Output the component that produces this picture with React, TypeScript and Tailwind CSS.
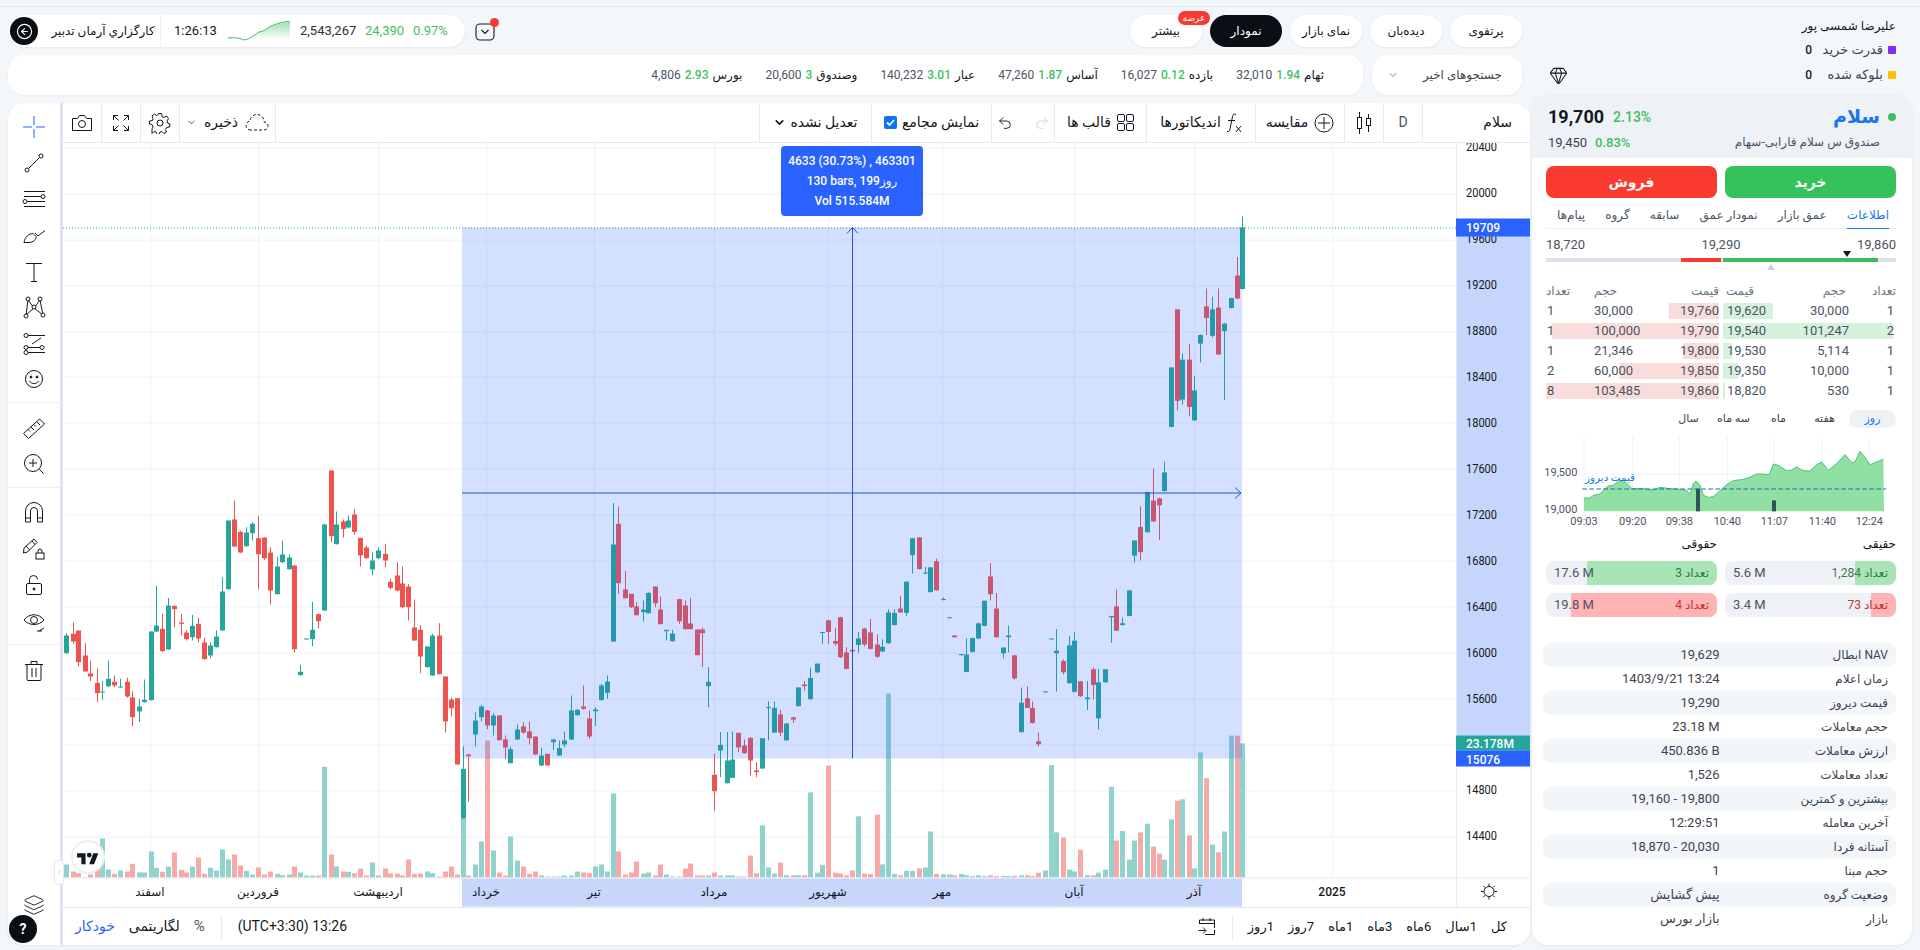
import React from "react";
import { ChevronDown, ChevronLeft, CircleArrowLeft, Gem, Layers, Undo2, Redo2 } from "lucide-react";

// [x, wickTop, bodyTop, bodyBottom, wickBottom, colour, volumeTop]
// numbers are read off two crops, converted below
type C = [number, number, number, number, number, "g" | "r", number];

const left: C[] = [
  [14,578,585,638,640,"g",1272],[28,546,580,603,610,"r",1293],[41,570,570,665,678,"r",1298],[55,608,645,693,693,"r",1310],[68,660,699,708,722,"r",1302],
  [82,684,727,758,785,"r",1285],[95,722,753,755,778,"g",1194],[108,660,715,737,740,"g",1287],[122,705,724,735,740,"r",1300],[135,715,738,740,742,"g",1290],
  [149,712,724,768,772,"r",1293],[162,752,771,830,858,"r",1270],[176,775,798,813,845,"g",1296],[189,717,778,785,786,"g",1296],[203,573,573,779,780,"g",1233],
  [216,435,555,573,575,"g",1282],[229,520,565,632,634,"r",1294],[243,472,495,627,627,"g",1278],[256,495,496,506,560,"r",1236],[270,520,546,550,585,"r",1288],
  [283,568,576,596,600,"r",1296],[296,523,556,590,600,"g",1278],[310,532,550,594,606,"r",1251],[323,592,606,656,657,"r",1300],[337,605,615,645,653,"g",1282],
  [350,570,588,620,621,"g",1290],[364,410,453,570,571,"g",1227],[377,240,240,446,447,"g",1257],[390,180,237,318,320,"r",1242],[404,270,274,336,338,"r",1275],
  [417,260,276,317,318,"g",1291],[431,245,250,278,300,"g",1302],[444,225,293,341,447,"r",1281],[458,290,291,353,358,"r",1302],[471,320,336,450,492,"r",1293],
  [485,348,378,461,462,"g",1300],[498,300,342,365,368,"g",1304],[512,342,351,386,388,"g",1302],[525,373,375,626,636,"r",1278],[538,673,694,704,705,"g",1296],
  [552,594,594,596,597,"g",1305],[565,484,568,596,617,"g",1305],[579,520,521,542,564,"r",1305],[592,250,252,510,510,"g",979],[606,90,90,287,306,"r",1242],
  [619,213,252,311,312,"g",1278],[633,237,243,266,291,"r",1293],[646,225,240,261,264,"g",1294],[659,205,222,274,283,"r",1298],[673,292,292,345,378,"r",1284],
  [686,315,321,353,355,"r",1305],[700,335,360,387,404,"g",1266],[713,320,330,353,356,"g",1305],[727,310,340,360,380,"r",1284],[740,415,424,442,447,"r",1299],
  [754,365,405,450,453,"r",1299],[767,378,429,500,502,"r",1305],[780,430,438,500,540,"r",1257],[794,477,561,600,601,"r",1300],[807,555,568,648,698,"r",1299],
  [821,618,618,680,681,"g",1293],[834,580,585,705,706,"g",1298],[848,548,585,701,702,"r",1308],[862,708,708,843,876,"r",1293],[875,770,777,803,828,"r",1278],
  [889,773,773,972,972,"r",1302],[902,918,985,1134,1134,"g",1134],[915,940,942,947,1083,"r",1305],[929,815,840,882,918,"g",1272],[942,793,798,830,842,"g",1203],
  [956,808,810,855,866,"r",900],[969,818,825,855,885,"g",1230],[983,825,825,899,900,"r",1296],[996,885,897,921,955,"r",1305],[1009,918,926,968,969,"g",1188],
  [1023,852,867,897,898,"g",1260],[1036,845,858,876,880,"r",1278],[1050,843,873,893,912,"r",1300],[1063,888,888,942,944,"r",1293],[1077,922,945,975,977,"g",1305],
  [1090,940,940,975,975,"r",1308],[1104,895,897,905,928,"g",1308],[1117,900,923,945,946,"g",1308],[1130,873,900,912,920,"g",1305],[1144,765,810,897,898,"g",1305],
  [1157,805,808,824,826,"g",1293],[1171,735,798,805,808,"r",1296],[1184,810,834,888,895,"r",1298],[1198,800,807,812,857,"g",1278],[1211,730,735,779,780,"g",1272],
  [1225,705,723,757,775,"g",1293],[1238,188,312,603,604,"g",1059],[1251,198,250,428,460,"r",1233],[1265,392,447,473,475,"r",1302],[1278,460,460,500,502,"r",1296],
  [1291,485,498,524,525,"r",1263],[1305,480,507,515,543,"g",1299],[1318,456,457,518,519,"g",1296],[1332,438,438,488,500,"r",1305],[1345,468,507,551,552,"r",1272],
  [1358,568,568,572,600,"g",1302],[1372,568,579,602,603,"g",1308],[1386,475,476,542,550,"r",1308],[1399,480,495,566,567,"r",1284],[1412,473,549,566,567,"r",1269],
  [1426,567,567,644,645,"r",1305],[1439,562,567,578,680,"r",1305],[1452,680,724,737,800,"g",1305],[1466,940,1003,1052,1110,"r",1296],[1479,875,913,930,1010,"g",1305],
  [1493,875,960,1028,1029,"g",1305],[1506,873,957,1012,1013,"g",1305],[1519,877,877,921,935,"r",1308],[1533,897,915,938,940,"r",1308],[1546,890,892,960,1005,"r",1245],
  [1560,965,990,995,1010,"r",1298],
];

const right: C[] = [
  [5,1240,1240,1310,1310,"g",1441],[18,1155,1168,1170,1245,"g",1538],[30,1155,1170,1227,1228,"g",1552],[43,1175,1185,1227,1235,"r",1527],[56,1205,1206,1245,1245,"g",1556],
  [69,1190,1192,1197,1205,"r",1556],[81,1122,1123,1166,1167,"g",1556],[94,1108,1116,1120,1130,"r",1556],[107,1077,1101,1150,1151,"g",1365],[120,1067,1068,1088,1090,"g",1550],
  [132,995,995,997,1022,"g",1532],[145,968,968,995,1022,"r",1303],[158,985,1016,1022,1027,"r",1550],[170,960,961,1053,1055,"r",1552],[183,1030,1042,1080,1081,"r",1556],
  [196,1028,1036,1040,1085,"r",1545],[208,995,1010,1025,1043,"g",1420],[221,985,987,1024,1028,"r",1552],[234,965,996,1034,1036,"r",1553],[247,1000,1024,1052,1055,"r",1416],
  [259,1012,1029,1040,1041,"g",1531],[272,943,950,1021,1022,"g",1137],[285,943,951,979,980,"g",1553],[297,912,941,950,951,"r",1556],[310,878,879,951,958,"g",1546],
  [323,778,779,818,860,"g",1546],[336,777,777,850,851,"r",1540],[349,845,858,860,862,"g",1538],[361,846,846,903,904,"g",1455],[374,826,832,899,900,"r",1553],
  [387,915,919,921,922,"g",1554],[400,961,961,963,963,"g",1554],[412,1003,1003,1007,1008,"r",1556],[425,1046,1046,1048,1050,"g",1553],[437,1010,1047,1087,1088,"g",1556],
  [450,1008,1009,1041,1042,"g",1558],[463,973,975,1010,1012,"g",1556],[475,923,923,981,982,"g",1558],[488,836,867,908,922,"r",1556],[501,905,941,1007,1008,"r",1558],
  [514,1030,1031,1044,1056,"g",1558],[526,980,1003,1007,1042,"g",1558],[539,1048,1049,1102,1105,"r",1557],[552,1123,1158,1226,1227,"g",1556],[565,1120,1148,1170,1171,"r",1556],
  [577,1155,1170,1205,1206,"r",1558],[590,1227,1247,1254,1259,"r",1550],[603,1132,1132,1134,1134,"g",1545],[616,1010,1010,1012,1012,"g",1302],[628,988,1038,1044,1132,"g",1457],
  [641,1058,1062,1088,1093,"r",1469],[654,1005,1026,1113,1114,"g",1543],[666,996,1015,1133,1134,"g",1547],[679,1108,1109,1143,1145,"r",1497],[692,1108,1146,1150,1175,"g",1556],
  [705,1077,1081,1117,1150,"r",1556],[717,1080,1111,1194,1220,"g",1550],[730,1081,1081,1111,1112,"g",1543],[743,958,958,961,1020,"g",1352],[755,897,936,992,993,"r",1476],
  [768,962,975,979,980,"g",1454],[781,899,899,958,959,"g",1520],[793,783,784,819,835,"g",1476],[806,705,753,811,830,"r",1457],[819,672,672,765,766,"g",1437],
  [832,618,692,740,741,"r",1490],[845,685,687,703,783,"r",1506],[857,602,627,670,671,"g",1520],[870,385,385,522,523,"g",1427],[883,251,251,462,484,"r",1384],
  [895,353,367,459,470,"g",1381],[908,330,367,476,498,"r",1464],[920,405,438,507,508,"g",1540],[933,309,310,330,373,"g",1273],[946,203,244,271,310,"r",1332],
  [958,222,251,312,316,"g",1485],[971,203,247,355,356,"r",1503],[984,282,284,301,460,"g",1455],[997,224,225,248,249,"g",1234],[1010,130,173,226,227,"r",1234],
  [1022,37,62,204,205,"g",1252],
];

const BASE = 877;
const candles = [
  ...left.map((c) => ({ x: Math.round(60 + c[0] / 2.24), wt: 440 + c[1] / 3, bt: 440 + c[2] / 3, bb: 440 + c[3] / 3, wb: 440 + c[4] / 3, c: c[5], v: 440 + c[6] / 3 })),
  ...right.map((c) => ({ x: Math.round(760 + c[0] / 2.119), wt: 200 + c[1] / 2.306, bt: 200 + c[2] / 2.306, bb: 200 + c[3] / 2.306, wb: 200 + c[4] / 2.306, c: c[5], v: 200 + c[6] / 2.306 })),
];

const prices = [20400,20000,19600,19200,18800,18400,18000,17600,17200,16800,16400,16000,15600,15200,14800,14400];
const priceY = (p: number) => 284.6 + (19200 - p) * 0.11484;
const months = [
  { x: 150, t: "اسفند" }, { x: 258, t: "فروردین" }, { x: 378, t: "اردیبهشت" }, { x: 486, t: "خرداد" }, { x: 594, t: "تیر" }, { x: 714, t: "مرداد" },
  { x: 828, t: "شهریور" }, { x: 942, t: "مهر" }, { x: 1074, t: "آبان" }, { x: 1194, t: "آذر" }, { x: 1332, t: "2025" },
];

function Chart() {
  return (
    <svg viewBox="63 143 1467 763" className="block w-full h-full" fontFamily="Roboto, 'DejaVu Sans', sans-serif">
      {prices.map((p) => (
        <line key={p} x1={63} x2={1456} y1={Math.round(priceY(p)) + 0.5} y2={Math.round(priceY(p)) + 0.5} stroke="#f0f2f6" />
      ))}
      {months.map((m) => (
        <line key={m.x} x1={m.x + 0.5} x2={m.x + 0.5} y1={143} y2={877} stroke="#f0f2f6" />
      ))}
      {candles.map((k, i) => (
        <rect key={i} x={k.x - 2} width={5} y={k.v} height={BASE - k.v} fill={k.c === "g" ? "#92d2cc" : "#f7a9a7"} />
      ))}
      {candles.map((k, i) => {
        const col = k.c === "g" ? "#26a69a" : "#ef5350";
        return (
          <g key={i} fill={col}>
            <rect x={k.x} width={1} y={k.wt} height={k.wb - k.wt} />
            <rect x={k.x - 2} width={5} y={k.bt} height={Math.max(k.bb - k.bt, 1)} />
          </g>
        );
      })}
      {/* dotted last price */}
      <line x1={63} x2={1456} y1={227.5} y2={227.5} stroke="#26a69a" strokeDasharray="1 2" />
      {/* measure range */}
      <rect x={462} y={227} width={780} height={531} fill="#2962ff" fillOpacity={0.2} />
      <line x1={462} x2={1241} y1={492.5} y2={492.5} stroke="#2a4fcf" />
      <line x1={852.5} x2={852.5} y1={227} y2={758} stroke="#2a4fcf" />
      <path d="M1235 487l6 5.5-6 5.5M847 233l5.5-6 5.5 6" fill="none" stroke="#2a4fcf" />

      {/* price axis */}
      <rect x={1456} y={143} width={1} height={734} fill="#e6e9f0" />
      <rect x={1457} y={227} width={73} height={531} fill="#c6d5fb" />
      {prices.filter((p) => p !== 15200).map((p) => (
        <text key={p} x={1466} y={priceY(p) + 4} fontSize={12} fill="#131722" textLength={31} lengthAdjust="spacingAndGlyphs">{p}</text>
      ))}
      <rect x={1456} y={218} width={74} height={18} fill="#2962ff" />
      <text x={1466} y={231.5} fontSize={12} fontWeight={500} fill="#fff">19709</text>
      <rect x={1456} y={735} width={74} height={15} fill="#26a69a" />
      <text x={1466} y={747} fontSize={12} fontWeight={500} fill="#fff">23.178M</text>
      <rect x={1456} y={750} width={74} height={16} fill="#2962ff" />
      <text x={1466} y={763} fontSize={12} fontWeight={500} fill="#fff">15076</text>

      {/* time axis */}
      <rect x={63} y={877} width={1467} height={1} fill="#e6e9f0" />
      <rect x={462} y={878} width={780} height={28} fill="#c8d6fb" />
      <rect x={1456} y={878} width={1} height={28} fill="#e6e9f0" />
      {months.map((m) => (
        <text key={m.t} x={m.x} y={895} fontSize={12} fontWeight={m.t === "2025" ? 500 : 400} textAnchor="middle" fill="#131722" direction="rtl">{m.t}</text>
      ))}
      <g transform="translate(1481 883)" fill="none" stroke="#131722">
        <circle cx={8} cy={8} r={5} />
        <path d="M8 0v2.5M8 13.5V16M0 8h2.5M13.5 8H16M2.3 2.3l1.8 1.8M12 12l1.8 1.8M2.3 13.7l1.8-1.8M12 4l1.8-1.8" />
      </g>
    </svg>
  );
}

const I = ({ children, w = 28 }: { children: React.ReactNode; w?: number }) => (
  <svg width={w} height={w} viewBox="0 0 28 28" fill="none" stroke="#131722" strokeWidth={1}>{children}</svg>
);

const groups: React.ReactNode[][] = [
  [
    <I><path d="M14 3v9M14 16v9M3 14h9M16 14h9" stroke="#2962ff" /></I>,
    <I><path d="M8.5 19.5l11-11" /><circle cx="7" cy="21" r="2" /><circle cx="21" cy="7" r="2" /></I>,
    <I><path d="M4 6.500h21M4 11.500h17M7 16.500h18M4 21.500h21" /><circle cx="23" cy="11.500" r="2" /><circle cx="5" cy="16.500" r="2" /></I>,
    <I><path d="M4 21.500c1-6 5-9 9-9l3 3c.5 3-3 6-7 6zM15 12l3 3 7-5.500" /></I>,
    <I><path d="M6 6.500h16M14 6.500v18M11 24.500h6" /></I>,
    <I><path d="M8 7L6 22M8 7l6 8 6-8 3 15M6 22l8-7 9 7" /><circle cx="8" cy="6" r="2" fill="#fff" /><circle cx="20" cy="6" r="2" fill="#fff" /><circle cx="14" cy="14" r="2" fill="#fff" /><circle cx="6" cy="23" r="2" fill="#fff" /><circle cx="23" cy="22" r="2" fill="#fff" /></I>,
    <I><path d="M8 6.500h17M8 18.500h13M8 23.500h17M12 15l9-6" /><circle cx="6" cy="6.500" r="2" fill="#fff" /><circle cx="6" cy="18.500" r="2" fill="#fff" /><circle cx="6" cy="23.500" r="2" fill="#fff" /><circle cx="22" cy="18.500" r="2" fill="#fff" /></I>,
    <I><circle cx="14" cy="14" r="8.500" /><circle cx="11" cy="12" r="1" fill="#131722" /><circle cx="17" cy="12" r="1" fill="#131722" /><path d="M9.500 16c2 3.500 7 3.500 9 0" /></I>,
  ],
  [
    <I><path d="M3.500 19.500L19.500 5l5 5L8.500 24.500zM8 15.500l2 2M11 13l3 3M14 10.500l2 2M17 8l3 3" /></I>,
    <I><circle cx="13" cy="13" r="8.500" /><path d="M13 9v8M9 13h8M19.500 19.500l4 4" /></I>,
  ],
  [
    <I><path d="M5.500 23V12a8.500 8.500 0 0117 0v11h-5V12a3.500 3.500 0 00-7 0v11zM5.500 19h5M17.500 19h5" /></I>,
    <I><path d="M4 13L14 4l3 3.500L7.500 17l-4 1zM6 11l3.500 4M12 6l3 3.500" /><rect x="16" y="18" width="8" height="6" /><path d="M18 18v-2a2 2 0 014 0v2" /></I>,
    <I><rect x="6.500" y="12.500" width="15" height="11" rx="1.500" /><path d="M9.500 12.500V8.500a4 4 0 018 0" /><circle cx="14" cy="18" r="1" fill="#131722" /></I>,
    <I><path d="M4 13c5-7 15-7 20 0-5 6-15 6-20 0z" /><circle cx="14" cy="13" r="3.500" /><path d="M17 24h5M19 24l5-3" /></I>,
  ],
  [<I><path d="M5 7.500h18M11 7.500V4.500h6v3M7 7.500v15a1 1 0 001 1h12a1 1 0 001-1v-15M12 11v9M16 11v9" /></I>],
];

const asks = [
  { n: 1, v: "30,000", p: "19,760", w: 50 },
  { n: 1, v: "100,000", p: "19,790", w: 167 },
  { n: 1, v: "21,346", p: "19,800", w: 36 },
  { n: 2, v: "60,000", p: "19,850", w: 100 },
  { n: 8, v: "103,485", p: "19,860", w: 173 },
];
const bids = [
  { n: 1, v: "30,000", p: "19,620", w: 50 },
  { n: 2, v: "101,247", p: "19,540", w: 170 },
  { n: 1, v: "5,114", p: "19,530", w: 9 },
  { n: 1, v: "10,000", p: "19,350", w: 15 },
  { n: 1, v: "530", p: "18,820", w: 2 },
];

const info = [
  ["NAV ابطال", "19,629"],
  ["زمان اعلام", "1403/9/21 13:24"],
  ["قیمت دیروز", "19,290"],
  ["حجم معاملات", "23.18 M"],
  ["ارزش معاملات", "450.836 B"],
  ["تعداد معاملات", "1,526"],
  ["بیشترین و کمترین", "19,160 - 19,800"],
  ["آخرین معامله", "12:29:51"],
  ["آستانه فردا", "18,870 - 20,030"],
  ["حجم مبنا", "1"],
  ["وضعیت گروه", "پیش گشایش"],
  ["بازار", "بازار بورس"],
];

const tickers = [
  ["ثهام", "1.94", "32,010"],
  ["بازده", "0.12", "16,027"],
  ["آساس", "1.87", "47,260"],
  ["عیار", "3.01", "140,232"],
  ["وصندوق", "3", "20,600"],
  ["بورس", "2.93", "4,806"],
];

const area =
  "162,688 180,688 190,680 210,676 222,662 235,652 250,650 265,638 280,636 295,648 305,660 340,660 370,664 390,656 420,660 450,662 470,665 480,678 490,645 498,637 510,650 520,680 535,686 550,684 570,666 590,648 610,636 640,632 660,626 680,616 700,616 718,618 730,586 745,590 770,606 785,604 800,595 820,606 840,607 860,588 875,580 895,605 920,585 945,558 965,582 975,580 990,548 1000,560 1020,588 1040,580 1060,572";

function MiniChart() {
  const times = [[162, "09:03"], [308, "09:20"], [448, "09:38"], [592, "10:40"], [733, "11:07"], [877, "11:40"], [1018, "12:24"]] as const;
  return (
    <svg viewBox="0 490 1170 300" className="block w-[390px] h-[100px]" fontFamily="Roboto, 'DejaVu Sans', sans-serif">
      {times.map(([x]) => <line key={x} x1={x} x2={x} y1={505} y2={728} stroke="#e8ebf0" strokeWidth={2} />)}
      <line x1={162} x2={1062} y1={616} y2={616} stroke="#e8ebf0" strokeWidth={2} />
      <polygon points={`162,728 ${area} 1062,728`} fill="#90dfa3" />
      <polyline points={area} fill="none" stroke="#4cc56f" strokeWidth={3} />
      <rect x={498} y={660} width={12} height={68} fill="#33535a" />
      <rect x={726} y={695} width={12} height={33} fill="#33535a" />
      <line x1={157} x2={1068} y1={661} y2={661} stroke="#1769d2" strokeWidth={3} strokeDasharray="14 7" />
      <text x={315} y={636} fontSize={31} fill="#1976ee" textAnchor="end">قیمت دیروز</text>
      <text x={43} y={621} fontSize={33} fill="#4b5563">19,500</text>
      <text x={43} y={733} fontSize={33} fill="#4b5563">19,000</text>
      {times.map(([x, t]) => <text key={x} x={x} y={768} fontSize={33} textAnchor="middle" fill="#4b5563">{t}</text>)}
    </svg>
  );
}

export default function App() {
  return (
    <div dir="ltr" className="w-[1920px] h-[950px] overflow-hidden bg-[#f4f7fa] text-[#131722] font-['Roboto','DejaVu_Sans',sans-serif]">
      <div className="h-[7px] border-b border-[#e1e6ef]" />
      <div className="flex pl-2 gap-[2px]">
        {/* left column */}
        <div className="w-[1522px]">
          <div className="flex justify-between items-center h-8 mt-2 pr-2">
            <div className="flex items-center gap-[10px]">
              <div className="flex items-center h-8 w-[457px] pl-[2px] bg-white rounded-full shadow-[0_1px_3px_rgba(20,30,60,.08)] text-[13px]">
                <div className="w-7 h-7 rounded-full bg-[#0b0e14] flex items-center justify-center text-white">
                  <CircleArrowLeft size={17} strokeWidth={1.6} />
                </div>
                <div className="w-[122px] pl-2 text-center text-[12px] whitespace-nowrap">كارگزاري آرمان تدبير</div>
                <div className="w-px h-8 bg-[#eef0f4]" />
                <div className="ml-[13px] w-[42px]">1:26:13</div>
                <svg className="ml-[11px]" width="65" height="20" viewBox="0 0 65 20">
                  <defs>
                    <linearGradient id="spark" x1="0" y1="0" x2="0" y2="1">
                      <stop offset="0" stopColor="#4cc56f" stopOpacity=".55" />
                      <stop offset="1" stopColor="#4cc56f" stopOpacity="0" />
                    </linearGradient>
                  </defs>
                  <path d="M1 17c6-1 12 0 16 2 7-1 11-6 15-8 6-1 7-3 12-6l19-5v19H1z" fill="url(#spark)" />
                  <path d="M1 17c6-1 12 0 16 2 7-1 11-6 15-8 6-1 7-3 12-6 5-2 14-5 19-5" fill="none" stroke="#48bb68" strokeWidth="1" />
                </svg>
                <div className="ml-2 w-[57px] text-[#2b3140]">2,543,267</div>
                <div className="ml-2 w-[40px] text-[#3fbf62]">24,390</div>
                <div className="ml-2 text-[#3fbf62]">0.97%</div>
              </div>
              <div className="relative w-[22px] h-[20px]">
                <svg width="22" height="20" viewBox="0 0 22 20" fill="none" stroke="#131722" strokeWidth="1.100">
                  <rect x="1" y="3" width="18" height="16" rx="4" />
                  <path d="M6.500 9l3.500 3.500L13.500 9" />
                </svg>
                <span className="absolute -top-[3px] right-[-2px] w-[9px] h-[9px] rounded-full bg-[#f73b33]" />
              </div>
            </div>
            <div dir="rtl" className="flex gap-2 text-[12px]">
              {["پرتفوی", "دیده‌بان", "نمای بازار", "نمودار", "بیشتر"].map((t, i) => (
                <div key={t} className={`relative w-[72px] h-8 rounded-full flex items-center justify-center ${i === 3 ? "bg-[#0b0e14] text-white" : "bg-white shadow-[0_1px_3px_rgba(20,30,60,.08)]"}`}>
                  {t}
                  {i === 4 && <span className="absolute -top-1 -right-2 h-[14px] w-8 rounded-full bg-[#f73b33] text-white text-[9px] leading-[14px] text-center">عرضه</span>}
                </div>
              ))}
            </div>
          </div>
          <div className="flex gap-[9px] h-10 mt-2 mr-2" dir="rtl">
            <div className="w-[150px] bg-white rounded-2xl flex items-center justify-between pr-[20px] pl-[15px] text-[12px] text-[#3d4450] shadow-[0_1px_3px_rgba(20,30,60,.06)] whitespace-nowrap">
              جستجوهای اخیر
              <ChevronDown size={12} strokeWidth={1.3} />
            </div>
            <div className="flex-1 bg-white rounded-2xl flex items-center pr-[39px] gap-[23px] text-[12px] shadow-[0_1px_3px_rgba(20,30,60,.06)]">
              {tickers.map(([n, c, v]) => (
                <div key={n} className="flex items-center gap-1 whitespace-nowrap">
                  <span className="font-medium">{n}</span>
                  <span className="text-[#3fbf62] font-medium">{c}</span>
                  <span className="text-[#4b5563]">{v}</span>
                </div>
              ))}
            </div>
          </div>

          {/* chart card */}
          <div className="relative mt-2 h-[842px] bg-white rounded-2xl shadow-[0_1px_3px_rgba(20,30,60,.08)] flex overflow-hidden">
            <div className="w-[52px] shrink-0 flex flex-col items-center">
              {groups.map((g, i) => (
                <div key={i} className={`w-full flex flex-col items-center pb-[5px] ${i === 0 ? "pt-[6px]" : i === 3 ? "pt-2" : "pt-[7px]"} ${i < groups.length - 1 ? "border-b border-[#eceef2]" : ""}`}>
                  {g.map((ic, j) => <div key={j} className="h-9 flex items-center justify-center">{ic}</div>)}
                </div>
              ))}
              <div className="mt-auto self-start w-full flex flex-col items-start">
                <Layers size={22} strokeWidth={1} className="ml-[15px] -mb-px" />
                <div className="w-7 h-7 ml-px mb-[2px] rounded-full bg-[#0b0e14] text-white text-[14px] font-bold flex items-center justify-center">?</div>
              </div>
            </div>
            <div className="w-[3px] bg-[#dfe3f0]" />
            <div className="flex-1 flex flex-col min-w-0">
              <div className="h-10 shrink-0 flex border-b border-[#e6e9f0] text-[14px]">
                <div className="w-[39px] flex items-center justify-center border-r border-[#e6e9f0]">
                  <svg width="22" height="20" viewBox="0 0 22 20" fill="none" stroke="#131722"><path d="M1.500 5.500h5l2-3h5l2 3h5v12h-19z" /><circle cx="11" cy="11" r="3.500" /></svg>
                </div>
                <div className="w-[39px] flex items-center justify-center border-r border-[#e6e9f0]">
                  <svg width="18" height="18" viewBox="0 0 18 18" fill="none" stroke="#131722"><path d="M1.500 6V1.500H6M1.500 1.500l5 5M12 1.500h4.500V6M16.500 1.500l-5 5M1.500 12v4.500H6M1.500 16.500l5-5M12 16.500h4.500V12M16.500 16.500l-5-5" /></svg>
                </div>
                <div className="w-[39px] flex items-center justify-center border-r border-[#e6e9f0]">
                  <svg width="22" height="22" viewBox="0 0 22 22" fill="none" stroke="#131722"><circle cx="11" cy="11" r="3" /><path d="M9.500 1.500h3l.5 3 2 1 2.500-1.500 2 2.500-1.500 2.500.5 2 2.500 1-.5 3-3 .5-1 2 1 2.500-2.500 1.500-2-2-2 .5-1 2.500h-2l-1-2.500-2-.5-2 2L3 17l1-2.500-1-2-2.500-.5v-3l3-.5.5-2L3 4l2.500-2 2 1.500 2-1z" /></svg>
                </div>
                <div dir="rtl" className="w-[96px] flex items-center justify-center gap-[7px] border-r border-[#e6e9f0] text-[14px]">
                  <svg width="24" height="18" viewBox="0 0 24 18" fill="none" stroke="#131722" strokeDasharray="3 2"><path d="M6 16a4.500 4.500 0 01-1-9 7 7 0 0114 1 4 4 0 010 8z" /></svg>
                  ذخیره
                  <ChevronDown size={11} strokeWidth={1.5} />
                </div>
                <div className="flex-1" />
                <div className="w-[112px] flex items-center justify-center gap-1 border-l border-[#e6e9f0] text-[14px]">
                  <ChevronDown size={13} strokeWidth={3} />تعدیل نشده
                </div>
                <div className="w-[120px] flex items-center justify-center gap-[5px] border-l border-[#e6e9f0] text-[14px]">
                  <span className="w-[13px] h-[13px] rounded-[2px] bg-[#0a75f0] flex items-center justify-center">
                    <svg width="9" height="9" viewBox="0 0 9 9" fill="none" stroke="#fff" strokeWidth="1.800"><path d="M1 4.500l2.500 2.500L8 2" /></svg>
                  </span>
                  نمایش مجامع
                </div>
                <div className="w-[63px] flex items-center justify-center gap-[21px] border-l border-[#e6e9f0]">
                  <Undo2 size={16} strokeWidth={1.4} />
                  <Redo2 size={16} strokeWidth={1.2} className="text-[#c7cbd3]" />
                </div>
                <div dir="rtl" className="w-[92px] flex items-center justify-center gap-[6px] border-l border-[#e6e9f0]">
                  <svg width="17" height="17" viewBox="0 0 17 17" fill="none" stroke="#131722"><rect x=".5" y=".5" width="7" height="7" rx="1.500" /><rect x="9.500" y=".5" width="7" height="7" rx="1.500" /><rect x=".5" y="9.500" width="7" height="7" rx="1.500" /><rect x="9.500" y="9.500" width="7" height="7" rx="1.500" /></svg>
                  قالب ها
                </div>
                <div dir="rtl" className="w-[109px] flex items-center justify-center gap-[6px] border-l border-[#e6e9f0]">
                  <svg width="15" height="22" viewBox="0 0 15 22" fill="none" stroke="#131722"><path d="M9 2.500c-2-1-3 0-3.500 2L3 17c-.3 2-1.500 3-3 2.500M1 8.500h7M9 14l5 6M14 14l-5 6" /></svg>
                  اندیکاتورها
                </div>
                <div dir="rtl" className="w-[89px] flex items-center justify-center gap-[6px] border-l border-[#e6e9f0]">
                  <svg width="20" height="20" viewBox="0 0 20 20" fill="none" stroke="#131722"><circle cx="10" cy="10" r="9" /><path d="M10 4v12M4 10h12" /></svg>
                  مقایسه
                </div>
                <div className="w-[39px] flex items-center justify-center border-l border-[#e6e9f0]">
                  <svg width="16" height="24" viewBox="0 0 16 24" fill="none" stroke="#131722"><rect x="1.500" y="6.500" width="4" height="11" /><path d="M3.500 1v5.500M3.500 17.500V23M12.500 3v4.500M12.500 14.500V21" /><rect x="10.500" y="7.500" width="4" height="7" /></svg>
                </div>
                <div className="w-[39px] flex items-center justify-center border-l border-[#e6e9f0] text-[14px] text-[#4b5563]">D</div>
                <div className="w-[108px] flex items-center justify-end pr-[18px] border-l border-[#e6e9f0] text-[14px] font-medium">سلام</div>
              </div>
              <div className="relative flex-1 min-h-0">
                <Chart />
                <div className="absolute left-[718px] top-[3px] w-[142px] h-[70px] rounded-[4px] bg-[#2962ff] text-white text-[12px] font-medium leading-5 py-[5px] text-center">
                  <div>4633 (30.73%) , 463301</div>
                  <div>130 bars, 199روز</div>
                  <div>Vol 515.584M</div>
                </div>
                <div className="absolute left-[8px] bottom-[33px] w-[34px] h-[34px] rounded-full bg-white border-2 border-[#eceef0] flex items-center justify-center">
                  <svg width="22" height="17" viewBox="0 0 36 28" fill="#131722"><path d="M14 25H7V14H0V7h14v18zM28 25h-8l6.700-18H35l-7 18z" /><circle cx="20" cy="10" r="4" /></svg>
                </div>
              </div>
              <div className="h-[38px] shrink-0 border-t border-[#e6e9f0] flex items-center text-[14px]">
                <div className="ml-3 flex items-center gap-[14px] pr-[16px] border-r border-[#e6e9f0] h-6">
                  <span className="text-[#2962ff]">خودکار</span>
                  <span>لگاریتمی</span>
                  <span className="text-[15px] text-[#4b5563]">%</span>
                </div>
                <div className="ml-4">(UTC+3:30) 13:26</div>
                <div className="flex-1" />
                <svg className="mr-[17px]" width="17" height="20" viewBox="0 0 17 20" fill="none" stroke="#131722"><path d="M16.500 13v4.500H7M1 6.500h15.500V3h-15v3.500M5 1v3M12 1v3M16.500 6.500V11M.5 13.500h7M5 10.500l3 3-3 3" /></svg>
                <div dir="rtl" className="flex items-center h-6 pl-[15px] pr-[23px] border-l border-[#e6e9f0] gap-[14px] whitespace-nowrap text-[13px]">
                  {["کل", "1سال", "6ماه", "3ماه", "1ماه", "7روز", "1روز"].map((t) => <span key={t}>{t}</span>)}
                </div>
              </div>
            </div>
            <div className="absolute left-[46px] top-[757px] w-[10px] h-[25px] rounded-[4px] bg-white border border-[#e6e9f0] flex items-center justify-center">
              <ChevronLeft size={9} strokeWidth={1.2} className="text-[#8a8f99]" />
            </div>
          </div>
        </div>

        {/* right column */}
        <div className="w-[380px] shrink-0" dir="rtl">
          <div className="h-[87px] relative pr-4 pt-[11px] text-[12px]">
            <div className="font-medium text-[#131722] h-[16px] leading-[16px]">علیرضا شمسی پور</div>
            <div className="flex items-center gap-[5px] mt-2 h-4">
              <span className="w-2 h-2 rounded-[1px] bg-[#7b2ff7]" />
              <span className="w-[56px] text-[13px] whitespace-nowrap text-[#3d4450]">قدرت خرید</span>
              <span className="mr-[10px] font-medium">0</span>
            </div>
            <div className="flex items-center gap-[5px] mt-[9px] h-4">
              <span className="w-2 h-2 rounded-[1px] bg-[#ffc107]" />
              <span className="w-[56px] text-[13px] whitespace-nowrap text-[#3d4450]">بلوکه شده</span>
              <span className="mr-[10px] font-medium">0</span>
            </div>
            <Gem size={19} strokeWidth={1.3} className="absolute left-[17px] bottom-[9px]" />
          </div>
          <div className="h-[851px] bg-white rounded-t-2xl rounded-b-2xl shadow-[0_1px_3px_rgba(20,30,60,.08)] overflow-hidden">
            <div className="h-[64px] bg-[#eef1f6] pr-4 pl-4 relative">
              <div className="flex justify-between pt-[11px]">
                <div className="flex items-center gap-2">
                  <span className="w-2 h-2 rounded-full bg-[#3fbf62]" />
                  <span className="text-[19px] font-bold text-[#1976ee] leading-6">سلام</span>
                </div>
                <div dir="ltr" className="flex items-center gap-[9px]">
                  <span className="text-[18px] font-bold leading-6">19,700</span>
                  <span className="text-[14px] font-medium text-[#3fbf62]">2.13%</span>
                </div>
              </div>
              <div className="flex justify-between mt-[4px] pr-4 text-[13px]">
                <span className="text-[#4b5563] text-[12px]">صندوق س سلام فارابی-سهام</span>
                <div dir="ltr" className="flex items-center gap-2">
                  <span className="text-[#3d4450]">19,450</span>
                  <span className="font-medium text-[#3fbf62]">0.83%</span>
                </div>
              </div>
            </div>
            <div className="pl-[14px] pr-4 pt-2">
              <div className="flex gap-2">
                <div className="flex-1 h-8 rounded-lg bg-[#35c25a] text-white text-[14px] font-bold flex items-center justify-center">خرید</div>
                <div className="flex-1 h-8 rounded-lg bg-[#fb3a2f] text-white text-[14px] font-bold flex items-center justify-center">فروش</div>
              </div>
              <div className="flex justify-between h-[31px] border-b border-[#eef0f3] pr-[7px] pl-[11px] text-[12px] text-[#4b5563]">
                {["اطلاعات", "عمق بازار", "نمودار عمق", "سابقه", "گروه", "پیام‌ها"].map((t, i) => (
                  <div key={t} className={`pt-2 h-[31px] ${i === 0 ? "text-[#1976ee] border-b border-[#1976ee]" : ""}`}>{t}</div>
                ))}
              </div>
              <div dir="ltr" className="flex justify-between mt-2 text-[13px] text-[#4b5563] h-4 leading-4">
                <span>18,720</span>
                <span>19,290</span>
                <span>19,860</span>
              </div>
              <div dir="ltr" className="relative mt-[5px] h-1 bg-[#dde3ea]">
                <div className="absolute left-[135px] w-10 h-1 bg-[#f73b33]" />
                <div className="absolute left-[177px] w-[155px] h-1 bg-[#3dbb5e]" />
                <div className="absolute left-[297px] -top-[7px] w-0 h-0 border-x-[4px] border-x-transparent border-t-[6px] border-t-[#131722]" />
                <div className="absolute left-[221px] top-[6px] w-0 h-0 border-x-[4px] border-x-transparent border-b-[6px] border-b-[#c9d2da]" />
              </div>

              {/* order book */}
              <div dir="ltr" className="flex gap-1 mt-[21px] text-[13px] text-[#4b5563]">
                <div className="w-[173px]">
                  <div className="flex justify-between text-[12px] h-4 leading-4 mb-[4px] text-[#6b7280]">
                    <span className="w-12">تعداد</span>
                    <span className="flex-1">حجم</span>
                    <span>قیمت</span>
                  </div>
                  {asks.map((r) => (
                    <div key={r.p} className="relative h-4 mb-1 flex justify-between leading-4">
                      <div className="absolute right-0 top-0 h-4 bg-[#f9dcdc]" style={{ width: r.w }} />
                      <span className="relative w-12 pl-[1px]">{r.n}</span>
                      <span className="relative flex-1">{r.v}</span>
                      <span className="relative">{r.p}</span>
                    </div>
                  ))}
                </div>
                <div className="w-[173px]">
                  <div className="flex justify-between text-[12px] h-4 leading-4 mb-[4px] text-[#6b7280]">
                    <span className="pl-[3px]">قیمت</span>
                    <span className="flex-1 text-right">حجم</span>
                    <span className="w-[50px] text-right">تعداد</span>
                  </div>
                  {bids.map((r) => (
                    <div key={r.p} className="relative h-4 mb-1 flex justify-between leading-4">
                      <div className="absolute left-0 top-0 h-4 bg-[#d6f2dc]" style={{ width: r.w }} />
                      <span className="relative pl-[4px]">{r.p}</span>
                      <span className="relative flex-1 text-right">{r.v}</span>
                      <span className="relative w-[47px] text-right pr-[2px]">{r.n}</span>
                    </div>
                  ))}
                </div>
              </div>

              <div className="flex items-center mt-[7px] h-[18px] text-[11px] text-[#3d4450]">
                <div className="w-[47px] h-[18px] rounded-full bg-[#eef1f6] text-[#1976ee] flex items-center justify-center">روز</div>
                <div className="w-[47px] mr-[1px] text-center">هفته</div>
                <div className="w-[45px] text-center">ماه</div>
                <div className="w-[45px] text-center">سه ماه</div>
                <div className="w-[45px] text-center">سال</div>
              </div>
            </div>
            <div dir="ltr" className="-ml-[2px] mt-1">
              <MiniChart />
            </div>
            <div className="pl-[14px] pr-4">
              <div className="flex gap-2 text-[12px] h-[17px] leading-[17px] mt-1">
                <div className="flex-1">حقیقی</div>
                <div className="flex-1">حقوقی</div>
              </div>
              <div className="grid grid-cols-2 gap-2 mt-2 text-[13px]">
                {[
                  { v: "5.6 M", c: "تعداد 1,284", w: 41, g: true },
                  { v: "17.6 M", c: "تعداد 3", w: 130, g: true },
                  { v: "3.4 M", c: "تعداد 73", w: 25, g: false },
                  { v: "19.8 M", c: "تعداد 4", w: 146, g: false },
                ].map((b) => (
                  <div key={b.c} className="relative h-6 rounded-lg bg-[#eef1f5] overflow-hidden flex items-center justify-between px-2">
                    <div className={`absolute right-0 top-0 h-6 ${b.g ? "bg-[#a9e4b5]" : "bg-[#ffb3b3]"}`} style={{ width: b.w }} />
                    <span className={`relative text-[12px] ${b.g ? "text-[#2e7d4a]" : "text-[#c62f3c]"}`}>{b.c}</span>
                    <span dir="ltr" className="relative text-[#4b5563]">{b.v}</span>
                  </div>
                ))}
              </div>
            </div>
            <div className="pl-[11px] pr-4 mt-[26px]">
              {info.map(([l, v], i) => (
                <div key={l} className={`grid grid-cols-2 h-6 items-center rounded-lg text-[13px] ${i % 2 === 0 ? "bg-[#f3f6f9]" : ""}`}>
                  <span className="pr-2 text-[12px] text-[#3d4450]">{l}</span>
                  <span dir="rtl"><span dir="ltr" className="inline-block text-[#3d4450]">{v}</span></span>
                </div>
              ))}
            </div>
          </div>
        </div>
      </div>
    </div>
  );
}
